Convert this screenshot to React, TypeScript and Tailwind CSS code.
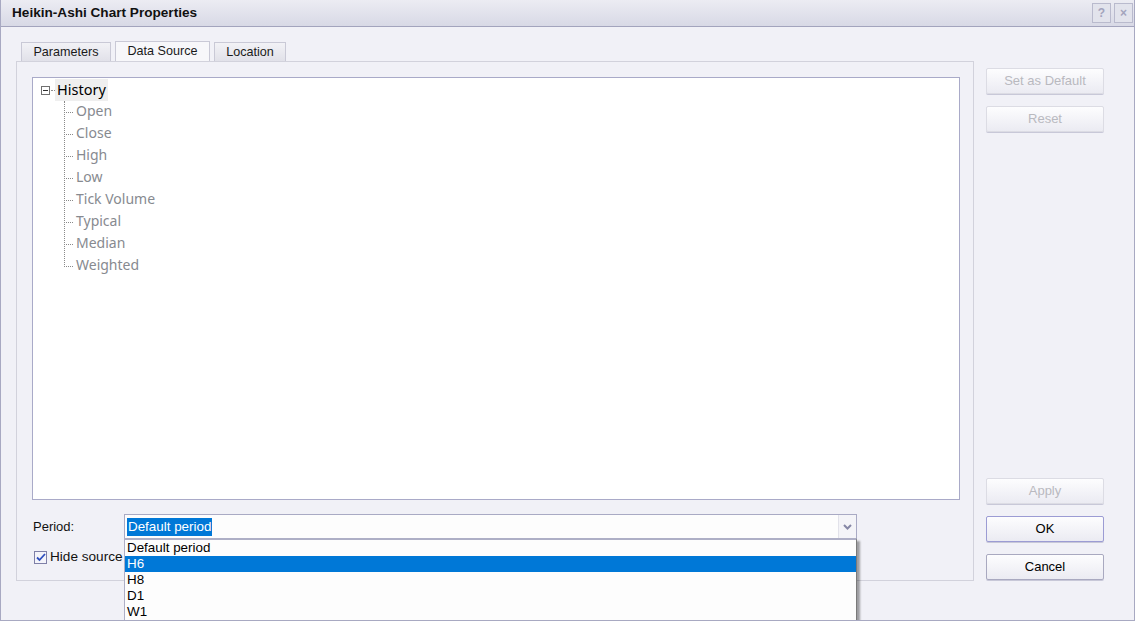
import React from 'react';

const ui = { fontFamily: '"Liberation Sans", Arial, sans-serif' };
const tree = { fontFamily: '"Noto Sans", "Open Sans", sans-serif' };

const leaves = ['Open', 'Close', 'High', 'Low', 'Tick Volume', 'Typical', 'Median', 'Weighted'];
const periods = ['Default period', 'H6', 'H8', 'D1', 'W1'];

function SideButton({ label, disabled, primary }: { label: string; disabled?: boolean; primary?: boolean }) {
  const border = disabled ? 'border-[#dcdce4]' : primary ? 'border-[#9c9cd4]' : 'border-[#a9a9c0]';
  return (
    <button
      className={`h-[26px] w-[118px] rounded-[2px] border ${border} bg-gradient-to-b from-[#fdfdfe] to-[#ebebf2] text-[13px] ${disabled ? 'text-[#b9b9bf]' : 'text-black'} shadow-[0_1px_0_#c8c8d8]`}
      style={ui}
    >
      {label}
    </button>
  );
}

export default function App() {
  return (
    <div className="relative h-[621px] w-[1135px] overflow-hidden border-x border-b border-[#a8a9c2] bg-[#f1f1f7]" style={ui}>
      {/* title bar */}
      <div className="flex h-[27px] items-center justify-between border-b border-[#a3a4bd] bg-gradient-to-b from-[#ececf3] to-[#d8d9e6] pl-[11px] pr-[1px]">
        <span className="text-[13.6px] font-bold text-[#111]">Heikin-Ashi Chart Properties</span>
        <div className="flex gap-[3px]">
          <div className="flex h-[20px] w-[19px] items-center justify-center border border-[#b9bacd] bg-[#e2e3ec] text-[12px] font-bold text-[#a3a4bd]">?</div>
          <div className="flex h-[20px] w-[19px] items-center justify-center border border-[#b9bacd] bg-[#e2e3ec] text-[12px] font-bold text-[#a3a4bd]">×</div>
        </div>
      </div>

      <div className="flex pl-[15px] pt-[14px]">
        {/* left column */}
        <div className="w-[958px]">
          <div className="flex h-[20px] items-end gap-[4px] pl-[5px] text-[12.6px]">
            <div className="flex h-[19px] w-[90px] items-center justify-center border border-b-0 border-[#c9c9d6] bg-gradient-to-b from-[#f2f2f6] to-[#e1e1e9] text-[#1a1a1a]">Parameters</div>
            <div className="flex h-[20px] w-[95px] items-center justify-center border border-b-0 border-[#c9c9d6] bg-[#f7f7fa] text-[#1a1a1a]">Data Source</div>
            <div className="flex h-[19px] w-[72px] items-center justify-center border border-b-0 border-[#c9c9d6] bg-gradient-to-b from-[#f2f2f6] to-[#e1e1e9] text-[#1a1a1a]">Location</div>
          </div>

          <div className="h-[520px] border border-[#d2d2dc] bg-[#f1f1f7] pl-[15px] pr-[13px] pt-[15px]">
            {/* tree */}
            <div className="h-[423px] border border-[#a9aac8] bg-white pl-[8px] pt-[1px]" style={tree}>
              <div className="flex h-[22px] items-center">
                <div className="flex h-[9px] w-[9px] items-center justify-center border border-[#707070] bg-white">
                  <div className="h-px w-[5px] bg-[#303030]" />
                </div>
                <div className="ml-[1px] w-[4px] border-t border-dotted border-[#909090]" />
                <div className="flex h-[22px] items-center bg-[#efefef] px-[2px] pb-px text-[14.5px] text-black">History</div>
              </div>
              <div className="relative ml-[23px]">
                <div className="absolute left-0 top-0 h-[166px] border-l border-dotted border-[#8a8a8a]" />
                {leaves.map((l) => (
                  <div key={l} className="flex h-[22px] items-center">
                    <div className="w-[9px] border-t border-dotted border-[#8a8a8a]" />
                    <span className="ml-[3px] pb-[2px] text-[14px] leading-[18px] text-[#878a90]">{l}</span>
                  </div>
                ))}
              </div>
            </div>

            {/* period */}
            <div className="mt-[14px] flex items-center">
              <span className="w-[92px] pl-[1px] text-[13px] text-[#111]">Period:</span>
              <div className="relative flex h-[25px] w-[733px] border border-[#a9aac4] bg-[#fdfdfd]">
                <div className="flex flex-1 items-center pl-[2px]">
                  <span className="bg-[#0078d7] px-px text-[13.4px] leading-[18px] text-white">Default period</span>
                </div>
                <div className="flex w-[18px] items-center justify-center border-l border-[#e2e2ea] bg-[#f4f4f8]">
                  <svg width="9" height="6" viewBox="0 0 9 6">
                    <path d="M1 1l3.5 3.5L8 1" fill="none" stroke="#8687a6" strokeWidth="2" />
                  </svg>
                </div>
                {/* dropdown list */}
                <div className="absolute left-[-1px] top-[23px] z-10 w-[733px] border-x border-t-2 border-[#aeafc6] border-r-[#7a7a7a] bg-[#fdfdfd] shadow-[3px_3px_2px_rgba(0,0,0,0.35)]">
                  {periods.map((p, i) => (
                    <div
                      key={p}
                      className={`flex h-[16px] items-center pl-[2px] text-[13.4px] ${i === 1 ? 'bg-[#0078d7] text-white' : 'text-black'}`}
                    >
                      {p}
                    </div>
                  ))}
                  <div className="h-[10px]" />
                </div>
              </div>
            </div>

            <div className="mt-[8px] flex items-center pl-[2px]">
              <div className="flex h-[13px] w-[13px] items-center justify-center border border-[#7f80a8] bg-[#f4f4fa]">
                <svg width="10" height="9" viewBox="0 0 10 9">
                  <path d="M1 4.5l2.5 2.5L9 1" fill="none" stroke="#2f4fbf" strokeWidth="1.8" />
                </svg>
              </div>
              <span className="ml-[3px] text-[13.6px] text-[#111]">Hide source</span>
            </div>
          </div>
        </div>

        {/* right column */}
        <div className="ml-[12px] mt-[27px] flex h-[512px] flex-col gap-[12px]">
          <SideButton label="Set as Default" disabled />
          <SideButton label="Reset" disabled />
          <div className="flex-1" />
          <SideButton label="Apply" disabled />
          <SideButton label="OK" primary />
          <SideButton label="Cancel" />
        </div>
      </div>
    </div>
  );
}
